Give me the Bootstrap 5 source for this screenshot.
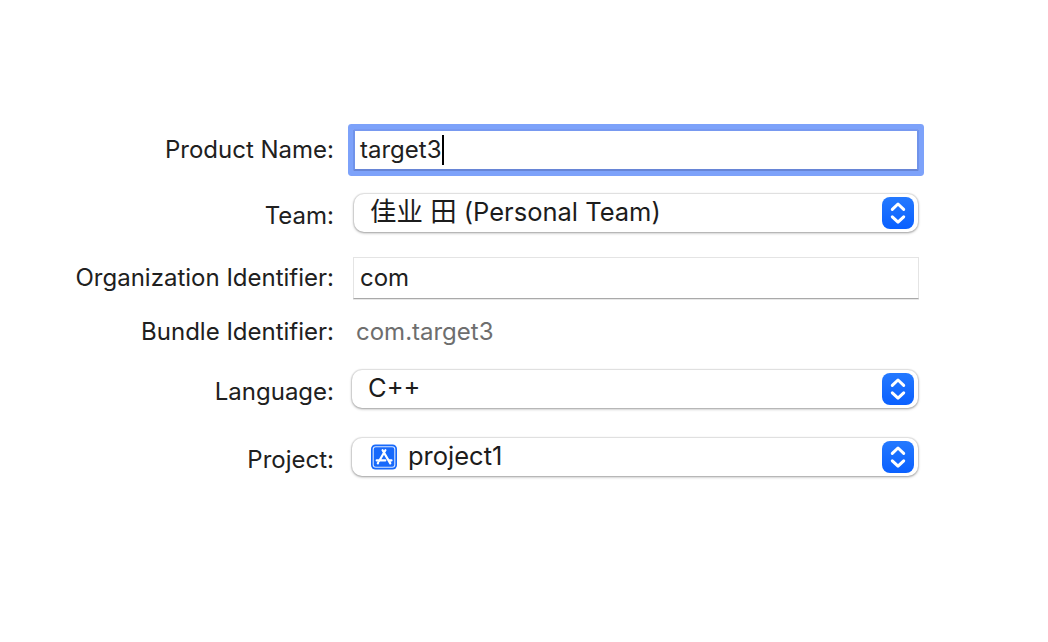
<!DOCTYPE html>
<html lang="en">
<head>
<meta charset="utf-8">
<meta name="viewport" content="width=device-width, initial-scale=1">
<title>New Target Options</title>
<link href="https://cdn.jsdelivr.net/npm/bootstrap@5.3.0/dist/css/bootstrap.min.css" rel="stylesheet">
<style>
body { font-family: Inter, "Noto Sans CJK SC", sans-serif; font-size: 24px; font-weight: 430; line-height: 30px; color: #202020; background: #fff; }
.options { width: 918px; padding-top: 129px; }
.options .line-label { width: 333px; white-space: nowrap; }
.options .line-label span { margin-right: -1px; }
.popup-row .line-label { padding-top: 5px; }
.field { margin-left: 20px; height: 42px; padding: 0 6px; border: 1px solid #e4e4e4; border-bottom: 1px solid #a9a9a9; white-space: nowrap; box-shadow: 0 1px 0 #e8e8e8; margin-right: -1px; }
.field.active { border: 2px solid #7093ea; border-color: #7899f0 #7093ea #6785d6; padding: 0 5px; box-shadow: 0 0 0 5px #7da2fa; border-radius: 1px; }
.caret { width: 2px; height: 30px; margin-left: 1px; background: #000; }
.popup { margin-left: 19px; height: 38px; padding: 0 4px 0 16px; border-radius: 10px; background: #fff; box-shadow: 0 0 1px 1px rgba(0,0,0,.09), 0 1px 3px rgba(0,0,0,.34); font-size: 25.5px; color: #1c1c1c; white-space: nowrap; }
.popup.inset { margin-left: 21px; }
.popup .value { padding-bottom: 3px; }
.han { font-size: 26.4px; font-weight: 400; line-height: 1; }
.stepper { width: 32px; height: 32px; border-radius: 8px; background: linear-gradient(#2479ff, #0a60ff); }
.stepper svg { stroke: #fff; stroke-width: 3; stroke-linecap: round; stroke-linejoin: round; fill: none; }
.muted-value { color: #6e6e6e; margin-left: 23px; }
.app-icon { margin: 0 11px 0 3px; }
.gap-popup { margin-top: 23px; }
.gap-org { margin-top: 25px; }
.gap-bundle { margin-top: 18px; }
.gap-project { margin-top: 30px; }
</style>
</head>
<body class="min-vh-100">
<main class="options pb-5">
  <div class="d-flex align-items-center">
    <label class="line-label text-end"><span>Product Name:</span></label>
    <div class="field active flex-grow-1 d-flex align-items-center"><span>target3</span><span class="caret"></span></div>
  </div>
  <div class="popup-row gap-popup d-flex align-items-center">
    <label class="line-label text-end"><span>Team:</span></label>
    <div class="popup inset flex-grow-1 d-flex align-items-center justify-content-between">
      <span class="value"><span class="han">佳业 田</span> (Personal Team)</span>
      <span class="stepper d-flex"><svg width="32" height="32" viewBox="0 0 32 32"><path d="M10.300 12.400 16 7l5.700 5.400M10.300 19.800 16 25.200l5.700-5.400"/></svg></span>
    </div>
  </div>
  <div class="gap-org d-flex align-items-center">
    <label class="line-label text-end"><span>Organization Identifier:</span></label>
    <div class="field flex-grow-1 d-flex align-items-center"><span>com</span></div>
  </div>
  <div class="gap-bundle d-flex align-items-center">
    <label class="line-label text-end"><span>Bundle Identifier:</span></label>
    <span class="muted-value">com.target3</span>
  </div>
  <div class="popup-row gap-popup d-flex align-items-center">
    <label class="line-label text-end"><span>Language:</span></label>
    <div class="popup flex-grow-1 d-flex align-items-center justify-content-between">
      <span class="value">C++</span>
      <span class="stepper d-flex"><svg width="32" height="32" viewBox="0 0 32 32"><path d="M10.300 12.400 16 7l5.700 5.400M10.300 19.800 16 25.200l5.700-5.400"/></svg></span>
    </div>
  </div>
  <div class="popup-row gap-project d-flex align-items-center">
    <label class="line-label text-end"><span>Project:</span></label>
    <div class="popup flex-grow-1 d-flex align-items-center">
      <svg class="app-icon" width="26" height="26" viewBox="0 0 26 26" fill="none"><rect width="26" height="25" y=".5" rx="4.500" fill="#1769fb"/><rect x="2.200" y="2.700" width="21.600" height="20.600" rx="2.500" stroke="#d9e7ff" stroke-width="1.100"/><g stroke="#fff" stroke-width="2.200" stroke-linecap="round"><path d="M14.400 6.200 8.300 16.800M11.600 6.200l7.700 13.200M5.700 16.400h8.600M18.300 16.400h2.200M7.200 18.700l-.4.700"/></g></svg>
      <span class="value me-auto">project1</span>
      <span class="stepper d-flex"><svg width="32" height="32" viewBox="0 0 32 32"><path d="M10.300 12.400 16 7l5.700 5.400M10.300 19.800 16 25.200l5.700-5.400"/></svg></span>
    </div>
  </div>
</main>
<script src="https://cdn.jsdelivr.net/npm/bootstrap@5.3.0/dist/js/bootstrap.bundle.min.js"></script>
</body>
</html>
